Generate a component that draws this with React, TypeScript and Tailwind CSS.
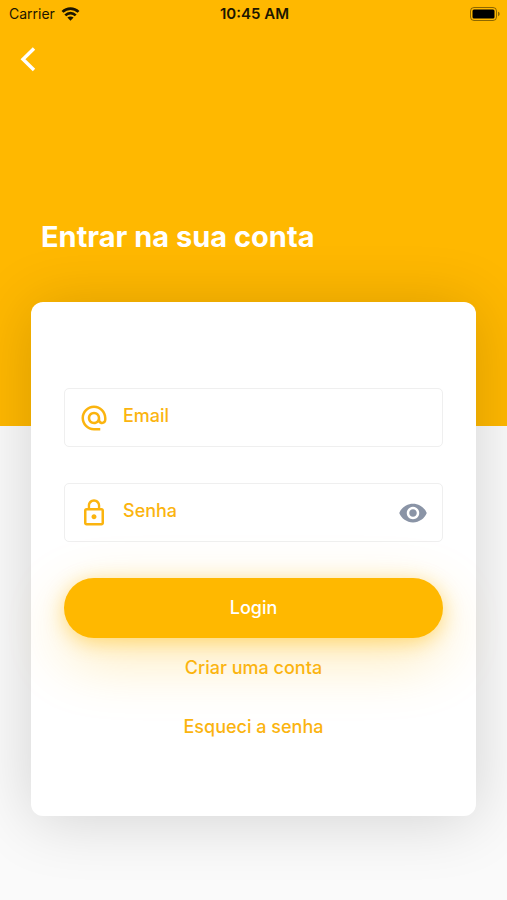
import React, { useState } from 'react';
import { MdAlternateEmail, MdLockOutline, MdVisibility } from 'react-icons/md';

interface FieldProps {
    id: string;
    label: string;
    type: string;
    icon: React.ReactNode;
    action?: React.ReactNode;
}

const StatusBar = () => (
    <div className="grid grid-cols-3 items-center h-7 pl-[9px] pr-[7px] text-[#1c1600]">
        <div className="flex items-center gap-1.5 text-sm">
            Carrier
            <svg width="19" height="14" viewBox="0 0 18 14" fill="none" stroke="currentColor" strokeWidth="2.7">
                <path d="M1 4.9C5.5 0.4 12.5 0.4 17 4.9" />
                <path d="M3.8 8.4C6.8 5.4 11.2 5.4 14.2 8.4" />
                <path d="M9 13.8L5.9 10.6C7.7 9 10.3 9 12.1 10.6Z" fill="currentColor" stroke="none" />
            </svg>
        </div>
        <div className="text-center text-[15px] font-semibold whitespace-nowrap">10:45 AM</div>
        <svg className="justify-self-end" width="30" height="14" viewBox="0 0 30 14">
            <rect x="0.5" y="0.5" width="26" height="13" rx="3.5" fill="none" stroke="#1c1600" strokeOpacity="0.5" />
            <rect x="2.5" y="2.5" width="22" height="9" rx="1.5" fill="#000" />
            <path d="M28 4.8C30.2 5.4 30.2 8.6 28 9.2Z" fill="#1c1600" fillOpacity="0.5" />
        </svg>
    </div>
);

const Field: React.FC<FieldProps> = ({ id, label, type, icon, action }) => (
    <div className="flex items-center h-[59px] px-3.5 border border-[#efefef] rounded-[5px] text-[#fbb40f]">
        <label htmlFor={id} aria-label={label} className="shrink-0">
            {icon}
        </label>
        <input
            id={id}
            type={type}
            placeholder={label}
            className="flex-1 min-w-0 h-full ml-3.5 pb-1 bg-transparent outline-none text-lg font-medium placeholder:text-[#fbb40f] placeholder:opacity-100"
        />
        {action}
    </div>
);

export default function App() {
    const [showPassword, setShowPassword] = useState(false);

    return (
        <div className="min-h-screen bg-[#fafafa] font-['Inter',sans-serif]">
            <header className="h-[426px] bg-[#ffb800]">
                <StatusBar />
                <button type="button" aria-label="Voltar" className="block mt-[18px] ml-5 text-white">
                    <svg width="16" height="26" viewBox="0 0 16 26" fill="none" stroke="currentColor" strokeWidth="3.4">
                        <path d="M14 2.5L3 13.3L14 24" />
                    </svg>
                </button>
                <h1 className="mt-[145px] ml-[41px] text-[29px] leading-10 font-bold text-white">
                    Entrar na sua conta
                </h1>
            </header>

            <main className="px-[31px] pb-[83px] -mt-[124px]">
                <form
                    onSubmit={(e) => e.preventDefault()}
                    className="px-[33px] pt-[86px] pb-[60px] bg-white rounded-xl shadow-[0_4px_64px_rgba(0,0,0,0.16)]"
                >
                    <div className="flex flex-col gap-9">
                        <Field id="email" label="Email" type="email" icon={<MdAlternateEmail size={30} />} />
                        <Field
                            id="senha"
                            label="Senha"
                            type={showPassword ? 'text' : 'password'}
                            icon={<MdLockOutline size={30} />}
                            action={
                                <button
                                    type="button"
                                    aria-label="Mostrar senha"
                                    onClick={() => setShowPassword(!showPassword)}
                                    className="text-[#8a94a6]"
                                >
                                    <MdVisibility size={30} />
                                </button>
                            }
                        />
                        <button
                            type="submit"
                            className="h-[60px] rounded-full bg-[#ffb800] text-white text-lg font-medium shadow-[0_4px_20px_rgba(255,184,0,0.45),0_20px_60px_rgba(255,184,0,0.3)]"
                        >
                            Login
                        </button>
                    </div>
                    <nav className="flex flex-col items-center text-lg leading-[59px] font-medium text-[#fbb40f]">
                        <a href="#criar">Criar uma conta</a>
                        <a href="#esqueci">Esqueci a senha</a>
                    </nav>
                </form>
            </main>
        </div>
    );
}
